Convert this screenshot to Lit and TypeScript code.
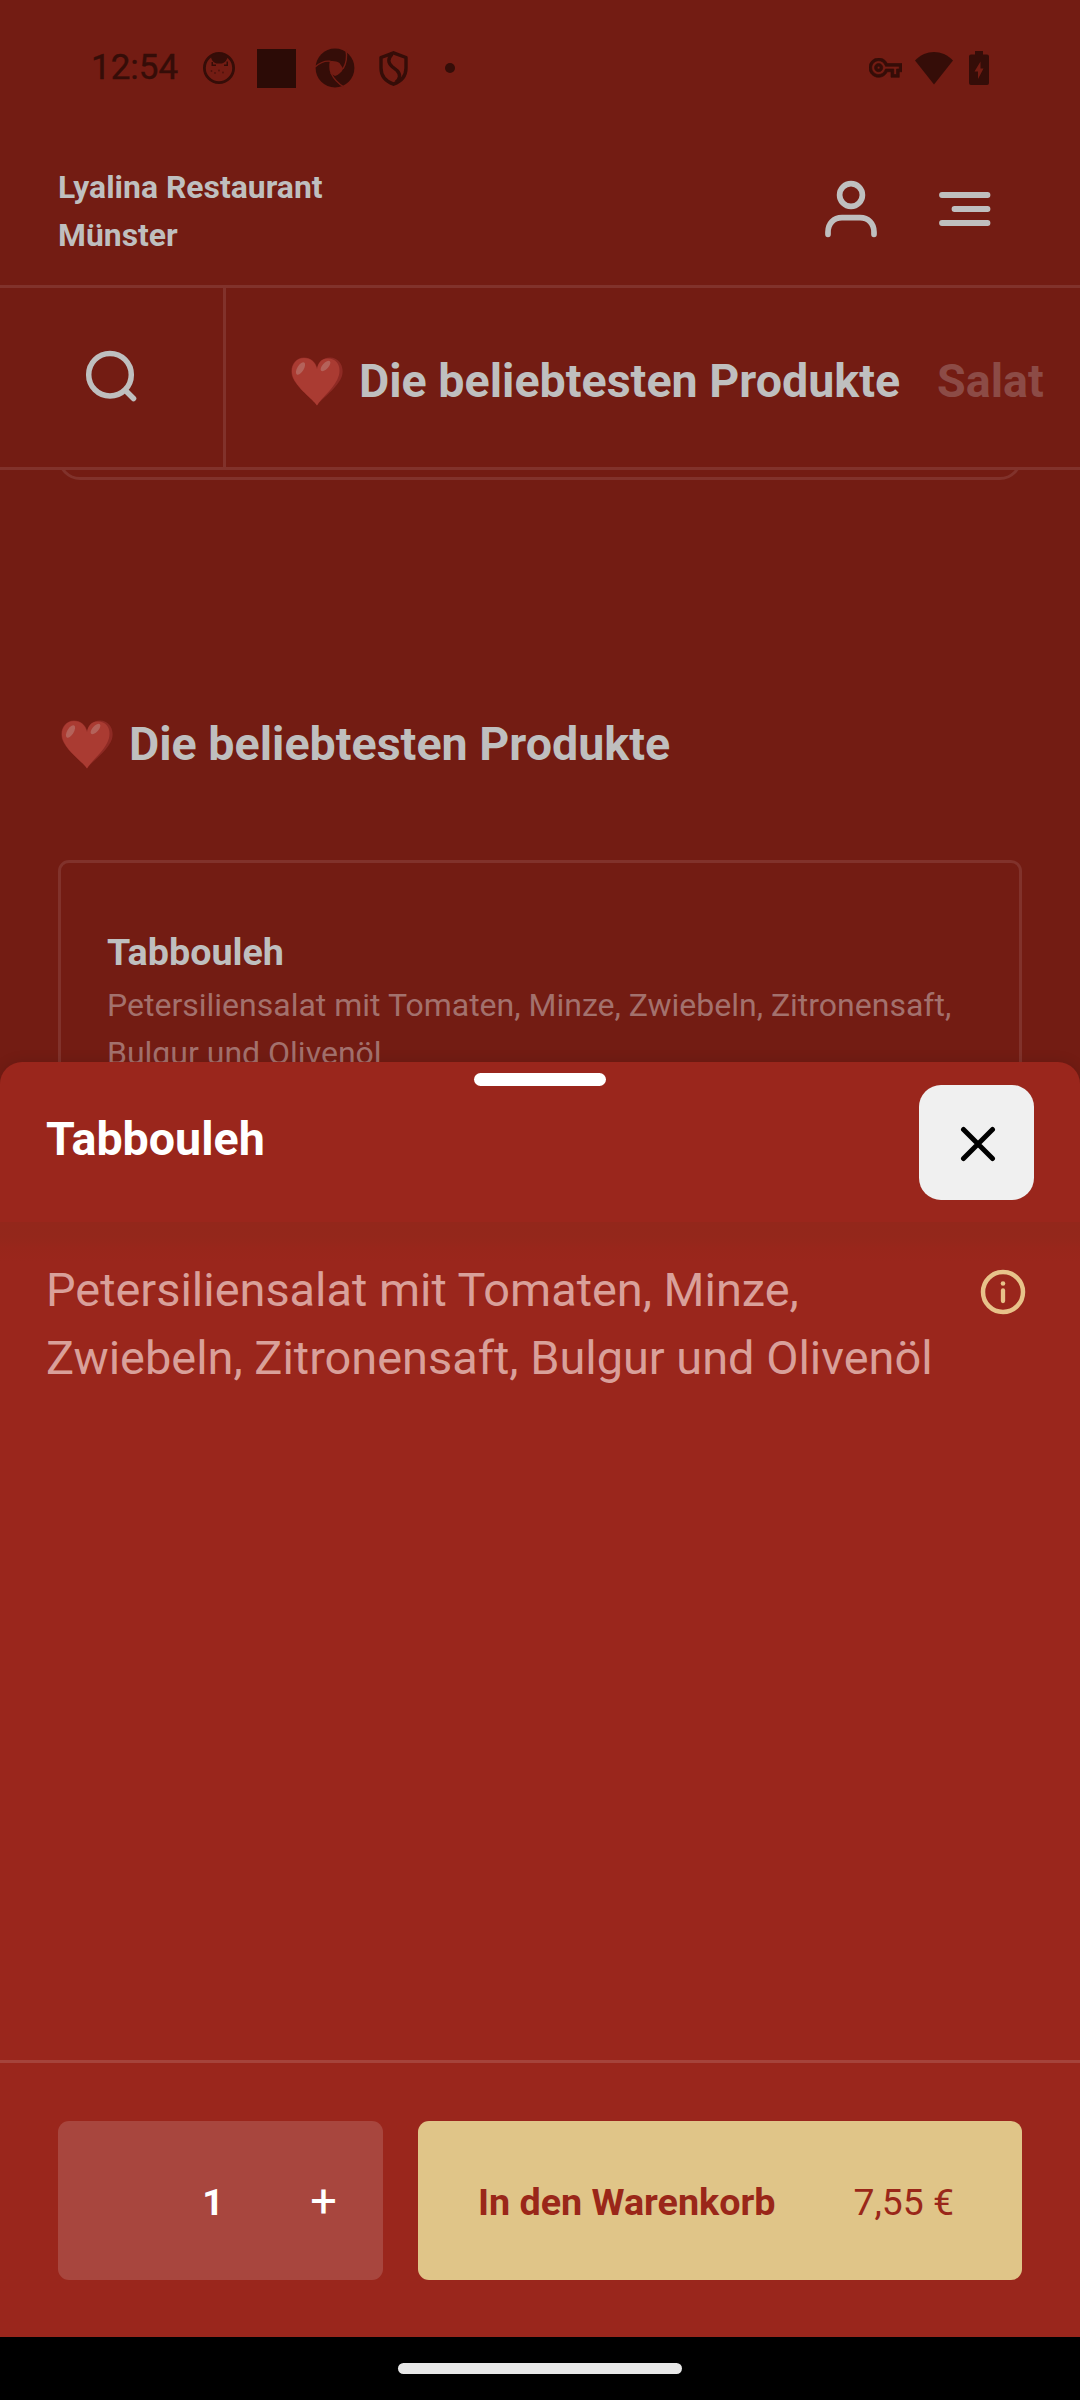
import { LitElement, html, css } from "lit";
import { customElement, property, state } from "lit/decorators.js";

const base = css`
  :host {
    display: block;
    box-sizing: border-box;
    font-family: Roboto, "Liberation Sans", sans-serif;
  }
  * {
    box-sizing: border-box;
  }
  svg {
    display: block;
    flex: none;
  }
`;

@customElement("status-bar")
class StatusBar extends LitElement {
  static styles = [
    base,
    css`
      :host {
        height: 136px;
        color: #350d08;
      }
      .bar {
        display: flex;
        justify-content: space-between;
        align-items: center;
        height: 136px;
        padding: 0 91px 0 91px;
      }
      .left,
      .right {
        display: flex;
        align-items: center;
      }
      .time {
        width: 112px;
        font-weight: 400;
        font-size: 35px;
        line-height: 40px;
        -webkit-text-stroke: 0.4px currentColor;
        white-space: nowrap;
      }
      .face {
        margin-right: 22px;
      }
      .app {
        width: 39px;
        height: 39px;
        background: #2c0b06;
        margin-right: 19px;
      }
      .aperture {
        margin-right: 24px;
      }
      .shield {
        margin-right: 37px;
      }
      .dot {
        width: 10px;
        height: 10px;
        border-radius: 50%;
        background: currentColor;
      }
      .key {
        margin-right: 13px;
      }
      .wifi {
        margin-right: 16px;
      }
    `,
  ];

  render() {
    return html`<div class="bar">
      <div class="left">
        <span class="time">12:54</span>
        <svg class="face" width="32" height="32" viewBox="0 0 32 32">
          <circle cx="16" cy="16" r="14.6" fill="none" stroke="currentColor" stroke-width="2.800" />
          <path
            fill="currentColor"
            d="M8 4C12 0.500 20 0.500 24.500 4C24.500 8 22 10.500 19 11.500H13.500C10.500 10.500 8 8 8 4ZM8.500 10H10V12.500H13V14H8.500ZM21 12.500H23.500V9.500H25V14H21Z"
          />
          <g fill="currentColor" opacity="0.6">
            <circle cx="8.500" cy="19" r="0.9" />
            <circle cx="12" cy="21" r="0.9" />
            <circle cx="16" cy="18.500" r="0.9" />
            <circle cx="20" cy="20.500" r="0.9" />
          </g>
        </svg>
        <div class="app"></div>
        <svg class="aperture" width="40" height="40" viewBox="0 0 40 40">
          <circle cx="20" cy="20" r="19.400" fill="currentColor" />
          <path fill="#731c13" d="M14.700 13.300C18 12.600 21.500 13.200 24.500 15L28.300 20.800C26.500 24.500 23.500 27 20 28L15.500 25.500C14 21.500 14 17 14.700 13.300Z" />
          <g fill="none" stroke="#731c13" stroke-width="1.400">
            <path d="M15.500 13.300C10 12.500 5 14.500 0 19" />
            <path d="M28 20.800C31 16 32.500 10 31 2" />
            <path d="M16 25C19 31.500 23 35.500 29 39" />
          </g>
        </svg>
        <svg class="shield" width="29" height="35" viewBox="0 0 29 35">
          <g fill="none" stroke="currentColor" stroke-width="3.400" stroke-linejoin="round">
            <path d="M14.500 1.800L27 6.500V17C27 25 22 30.500 14.500 33.200C7 30.500 2 25 2 17V6.500Z" />
            <path d="M13 3C8.500 8 9 12 13 15.500L18 19.500C22 23.500 21 28 17 31" />
          </g>
        </svg>
        <div class="dot"></div>
      </div>
      <div class="right">
        <svg class="key" width="33" height="19.25" viewBox="0 5 24 14">
          <path
            fill="currentColor"
            stroke="currentColor"
            stroke-width="0.5"
            d="M22 19h-6v-4h-2.680c-1.140 2.420-3.600 4-6.320 4-3.860 0-7-3.140-7-7s3.140-7 7-7c2.720 0 5.170 1.580 6.320 4H24v6h-2v4zm-4-2h2v-4h2v-2H11.940l-.230-.670C11.010 8.340 9.110 7 7 7c-2.760 0-5 2.240-5 5s2.240 5 5 5c2.110 0 4.010-1.340 4.710-3.330l.230-.670H18v4zM7 15c-1.650 0-3-1.350-3-3s1.350-3 3-3 3 1.350 3 3-1.350 3-3 3zm0-4c-.550 0-1 .450-1 1s.450 1 1 1 1-.450 1-1-.450-1-1-1z"
          />
        </svg>
        <svg class="wifi" width="38" height="33" viewBox="0 0 38 33">
          <path fill="currentColor" d="M0 8.500C11 -2.800 27 -2.800 38 8.500L19 32.500Z" />
        </svg>
        <svg width="20" height="34" viewBox="0 0 20 34">
          <path
            fill="currentColor"
            d="M6 0H14V3.400H18A2 2 0 0 1 20 5.400V32A2 2 0 0 1 18 34H2A2 2 0 0 1 0 32V5.400A2 2 0 0 1 2 3.400H6Z"
          />
          <path fill="#731c13" d="M11.500 10.500L5.500 20.500H9V28L14.500 17.500H11.500Z" />
        </svg>
      </div>
    </div>`;
  }
}

@customElement("heart-icon")
class HeartIcon extends LitElement {
  static styles = [
    base,
    css`
      :host {
        flex: none;
      }
    `,
  ];

  render() {
    return html`<svg width="52" height="49" viewBox="0 0 52 49">
      <path
        fill="#8e2a24"
        d="M26 48.500C22 42 5 31 1 19C-1.500 10 3.500 0.500 13 0.500C20 0.500 24.500 5 26 10.500C27.500 5 32 0.500 39 0.500C48.500 0.500 53.500 10 51 19C47 31 30 42 26 48.500Z"
      />
      <path
        fill="#aa3b32"
        d="M26 48.500C22 42 5.500 31 1.600 19C-1 10 4 1 13 1C20 1 24.500 5.500 26 12C27.500 5.500 30.500 1.500 37 1.500C46 1.500 50 9 48 18C45 30 30 41 26 48.500Z"
      />
      <ellipse cx="9.500" cy="11.500" rx="3.200" ry="7" transform="rotate(32 9.500 11.500)" fill="#b4625a" />
      <ellipse cx="34.500" cy="9" rx="3" ry="6.500" transform="rotate(42 34.500 9)" fill="#b4625a" />
    </svg>`;
  }
}

@customElement("shop-header")
class ShopHeader extends LitElement {
  static styles = [
    base,
    css`
      .top {
        display: flex;
        justify-content: space-between;
        height: 152px;
        padding: 26px 88px 0 58px;
        border-bottom: 3px solid #81322b;
      }
      .name {
        width: 290px;
        padding-top: 1px;
        font-weight: 700;
        font-size: 31.900px;
        line-height: 48.400px;
        color: #bfbfbf;
      }
      .icons {
        display: flex;
        gap: 60px;
        padding-top: 18px;
      }
      .nav {
        display: flex;
        height: 182px;
        border-bottom: 3px solid #81322b;
      }
      .search {
        width: 226px;
        padding: 62px 0 0 85px;
        border-right: 3px solid #81322b;
      }
      .tabs {
        display: flex;
        flex: 1;
        overflow: hidden;
        padding: 62px 0 0 65px;
        font-weight: 700;
        font-size: 46.600px;
        line-height: 62px;
        color: #bfbfbf;
        white-space: nowrap;
      }
      .tab {
        display: flex;
        margin-right: 37px;
      }
      .heart {
        margin: 7px 16px 0 0;
      }
      .muted {
        color: #8c4b46;
      }
    `,
  ];

  render() {
    return html`
      <div class="top">
        <div class="name">Lyalina Restaurant Münster</div>
        <div class="icons">
          <svg width="54" height="60" viewBox="0 0 54 60">
            <g fill="none" stroke="#bfbfbf" stroke-width="5.700" stroke-linecap="round">
              <circle cx="27" cy="15" r="11.400" />
              <path d="M4 54.300V52C4 43.500 9.500 37.700 18 37.700H36C44.500 37.700 50 43.500 50 52V54.300" />
            </g>
          </svg>
          <svg width="54" height="60" viewBox="0 0 54 60">
            <path
              d="M4 15H49.500M16.500 29H49.500M4 43H49.500"
              fill="none"
              stroke="#bfbfbf"
              stroke-width="5.800"
              stroke-linecap="round"
            />
          </svg>
        </div>
      </div>
      <div class="nav">
        <div class="search">
          <svg width="52" height="52" viewBox="0 0 52 52">
            <g fill="none" stroke="#bfbfbf" stroke-width="5.500" stroke-linecap="round">
              <circle cx="25" cy="24.700" r="21.300" />
              <path d="M40.500 40.500L48.500 48.500" />
            </g>
          </svg>
        </div>
        <div class="tabs">
          <div class="tab"><heart-icon class="heart"></heart-icon>Die beliebtesten Produkte</div>
          <div class="tab muted">Salat</div>
        </div>
      </div>
    `;
  }
}

@customElement("menu-list")
class MenuList extends LitElement {
  static styles = [
    base,
    css`
      :host {
        flex: 1;
        min-height: 0;
        overflow: hidden;
        padding: 0 58px;
      }
      .card {
        border: 3px solid #81322b;
        border-radius: 11px;
        height: 420px;
        padding: 65px 46px 0;
      }
      .previous {
        height: 100px;
        margin-top: -90px;
        border-radius: 22px;
      }
      .heading {
        display: flex;
        margin: 234px 0 86px;
        padding-left: 3px;
        height: 60px;
        font-weight: 700;
        font-size: 46.600px;
        line-height: 60px;
        color: #bfbfbf;
      }
      .heart {
        margin: 6px 16px 0 0;
      }
      .title {
        font-weight: 700;
        font-size: 37.700px;
        line-height: 48px;
        color: #bfbfbf;
      }
      .text {
        margin-top: 5px;
        font-size: 32px;
        line-height: 48.400px;
        color: #a3716d;
      }
    `,
  ];

  render() {
    return html`
      <div class="card previous"></div>
      <div class="heading"><heart-icon class="heart"></heart-icon>Die beliebtesten Produkte</div>
      <div class="card">
        <div class="title">Tabbouleh</div>
        <div class="text">
          Petersiliensalat mit Tomaten, Minze, Zwiebeln, Zitronensaft, Bulgur und Olivenöl
        </div>
      </div>
    `;
  }
}

@customElement("product-sheet")
class ProductSheet extends LitElement {
  @property() name = "";
  @property() text = "";
  @property({ type: Number }) price = 0;
  @state() private count = 1;

  static styles = [
    base,
    css`
      .sheet {
        display: flex;
        flex-direction: column;
        height: 1275px;
        border-radius: 22px 22px 0 0;
        background: #9a261c;
        box-shadow: 0 0 14px rgba(0, 0, 0, 0.12);
      }
      .handle {
        width: 132px;
        height: 13px;
        margin: 11px auto 0;
        border-radius: 7px;
        background: #fff;
      }
      .head {
        display: flex;
        justify-content: space-between;
        height: 136px;
        padding: 0 46px;
      }
      .title {
        padding-top: 23px;
        font-weight: 700;
        font-size: 46.600px;
        line-height: 60px;
        color: #fff;
      }
      .close {
        display: flex;
        align-items: center;
        justify-content: center;
        width: 115px;
        height: 115px;
        margin-top: -1px;
        padding: 2px 0 0 3px;
        border: 0;
        border-radius: 22px;
        background: #f0f0f0;
      }
      .body {
        display: flex;
        justify-content: space-between;
        flex: 1;
        padding: 34px 54px 0 46px;
        background: linear-gradient(#93271b 0, #94271b 16px, #98261b 26px, #9a261c 40px);
      }
      .text {
        width: 900px;
        font-size: 46.900px;
        line-height: 68px;
        color: #d9a09a;
      }
      .info {
        margin-top: 13px;
      }
      .foot {
        display: flex;
        gap: 35px;
        height: 277px;
        padding: 58px 58px 0;
        border-top: 3px solid #a5433b;
        font-size: 37.700px;
        line-height: 46px;
      }
      .count {
        display: grid;
        grid-template-columns: 1fr 88px 128px;
        align-items: center;
        width: 325px;
        height: 159px;
        border-radius: 11px;
        background: #a8463e;
        color: #fff;
        font-weight: 700;
        text-align: center;
      }
      .number {
        grid-column: 2;
        padding: 3px 0 0 4px;
      }
      .plus {
        padding: 1px 0 0 9px;
        font-weight: 400;
        font-size: 47px;
      }
      .add {
        display: flex;
        align-items: center;
        justify-content: space-between;
        flex: 1;
        height: 159px;
        padding: 3px 68px 0 60px;
        border-radius: 11px;
        background: #e0c588;
        color: #9a2719;
      }
      .label {
        font-weight: 700;
      }
      .price {
        font-size: 37.300px;
      }
    `,
  ];

  private amount() {
    return `${(this.price * this.count).toFixed(2).replace(".", ",")} €`;
  }

  render() {
    return html`<div class="sheet">
      <div class="handle"></div>
      <div class="head">
        <div class="title">${this.name}</div>
        <button class="close" aria-label="Schließen">
          <svg width="36" height="36" viewBox="0 0 36 36">
            <path
              d="M3.500 3.500L32.500 32.500M32.500 3.500L3.500 32.500"
              stroke="#000"
              stroke-width="5"
              stroke-linecap="round"
            />
          </svg>
        </button>
      </div>
      <div class="body">
        <div class="text">${this.text}</div>
        <svg class="info" width="46" height="46" viewBox="0 0 46 46">
          <circle cx="23" cy="23" r="20" fill="none" stroke="#e8c28a" stroke-width="4.500" />
          <circle cx="23" cy="14.500" r="2.300" fill="#e8c28a" />
          <path d="M23 21.500V32" stroke="#e8c28a" stroke-width="4.300" stroke-linecap="round" />
        </svg>
      </div>
      <div class="foot">
        <div class="count">
          <span class="number">${this.count}</span>
          <span class="plus" @click=${() => this.count++}>+</span>
        </div>
        <div class="add">
          <span class="label">In den Warenkorb</span>
          <span class="price">${this.amount()}</span>
        </div>
      </div>
    </div>`;
  }
}

@customElement("app-root")
class AppRoot extends LitElement {
  static styles = [
    base,
    css`
      :host {
        position: relative;
        width: 1080px;
        height: 2400px;
        overflow: hidden;
      }
      .page {
        display: flex;
        flex-direction: column;
        height: 2337px;
        background: #731c13;
      }
      .sheet {
        position: absolute;
        left: 0;
        right: 0;
        bottom: 63px;
      }
      .system {
        height: 63px;
        padding-top: 26px;
        background: #000;
      }
      .home {
        width: 284px;
        height: 11px;
        margin: 0 auto;
        border-radius: 5.500px;
        background: #e8e8e8;
      }
    `,
  ];

  render() {
    return html`
      <div class="page">
        <status-bar></status-bar>
        <shop-header></shop-header>
        <menu-list></menu-list>
      </div>
      <div class="system"><div class="home"></div></div>
      <product-sheet
        class="sheet"
        name="Tabbouleh"
        text="Petersiliensalat mit Tomaten, Minze, Zwiebeln, Zitronensaft, Bulgur und Olivenöl"
        .price=${7.55}
      ></product-sheet>
    `;
  }
}
